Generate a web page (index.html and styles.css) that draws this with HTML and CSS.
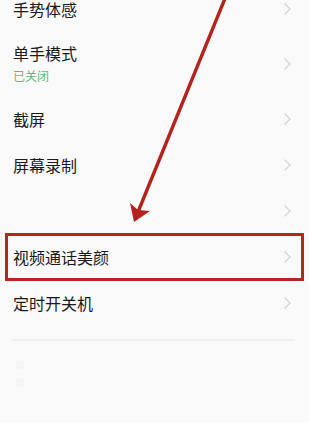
FILE: index.html
```html
<!DOCTYPE html>
<html lang="zh-CN">
<head>
    <meta charset="UTF-8">
    <meta name="viewport" content="width=device-width, initial-scale=1.0">
    <title>设置</title>
    <link rel="stylesheet" href="styles.css">
</head>
<body>
    <div class="screen">
        <ul class="settings">
            <li class="row"><span class="label">手势体感</span><span class="chev"></span></li>
            <li class="row tall">
                <div class="text">
                    <span class="label">单手模式</span>
                    <span class="sub">已关闭</span>
                </div>
                <span class="chev"></span>
            </li>
            <li class="row"><span class="label">截屏</span><span class="chev"></span></li>
            <li class="row"><span class="label">屏幕录制</span><span class="chev"></span></li>
            <li class="row"><span class="label"></span><span class="chev"></span></li>
            <li class="row marked"><span class="label">视频通话美颜</span><span class="chev"></span></li>
            <li class="row"><span class="label">定时开关机</span><span class="chev"></span></li>
        </ul>
        <div class="divider"></div>
        <div class="faint">
            <span></span>
            <span></span>
        </div>

        <!-- Markierung -->
        <svg class="arrow" width="309" height="423" viewBox="0 0 309 423">
            <line x1="226" y1="-4" x2="138" y2="212" stroke="#b3231c" stroke-width="3.4" stroke-linecap="round"/>
            <polygon points="134,222 130,203 138,210 150,211" fill="#b3231c"/>
        </svg>
    </div>
</body>
</html>
```

FILE: styles.css
```css
* {
    box-sizing: border-box;
}
html, body {
    margin: 0;
    padding: 0;
}
body {
    background-color: #f9f9f9;
    font-family: "Noto Sans CJK SC", "Noto Sans", sans-serif;
    color: #1a1a1a;
}
.screen {
    position: relative;
    width: 309px;
    height: 423px;
    overflow: hidden;
}
.settings {
    list-style: none;
    margin: -14px 0 0 0;
    padding: 0;
}
.row {
    position: relative;
    display: flex;
    align-items: center;
    justify-content: space-between;
    height: 46px;
    padding: 0 20px 0 13px;
}
.row.tall {
    height: 64px;
}
.text {
    display: flex;
    flex-direction: column;
}
.label {
    font-size: 16px;
    line-height: 22px;
}
.tall .label {
    margin-top: -2px;
}
.sub {
    font-size: 12px;
    line-height: 18px;
    color: #5fb97f;
    margin-top: 3px;
}
.chev {
    width: 8px;
    height: 8px;
    border-top: 1.3px solid #cdcdcd;
    border-right: 1.3px solid #cdcdcd;
    transform: rotate(45deg);
}
.marked::after {
    content: "";
    position: absolute;
    left: 5px;
    right: 5px;
    top: -1px;
    bottom: -1px;
    border: 3px solid #b3271f;
}
.divider {
    margin: 13px 14px 0 12px;
    height: 2px;
    background-color: #efefef;
}
.faint {
    display: flex;
    flex-direction: column;
    gap: 10px;
    padding: 20px 0 0 16px;
}
.faint span {
    width: 8px;
    height: 8px;
    background-color: #f5f5f5;
}
.arrow {
    position: absolute;
    left: 0;
    top: 0;
    pointer-events: none;
}
```
